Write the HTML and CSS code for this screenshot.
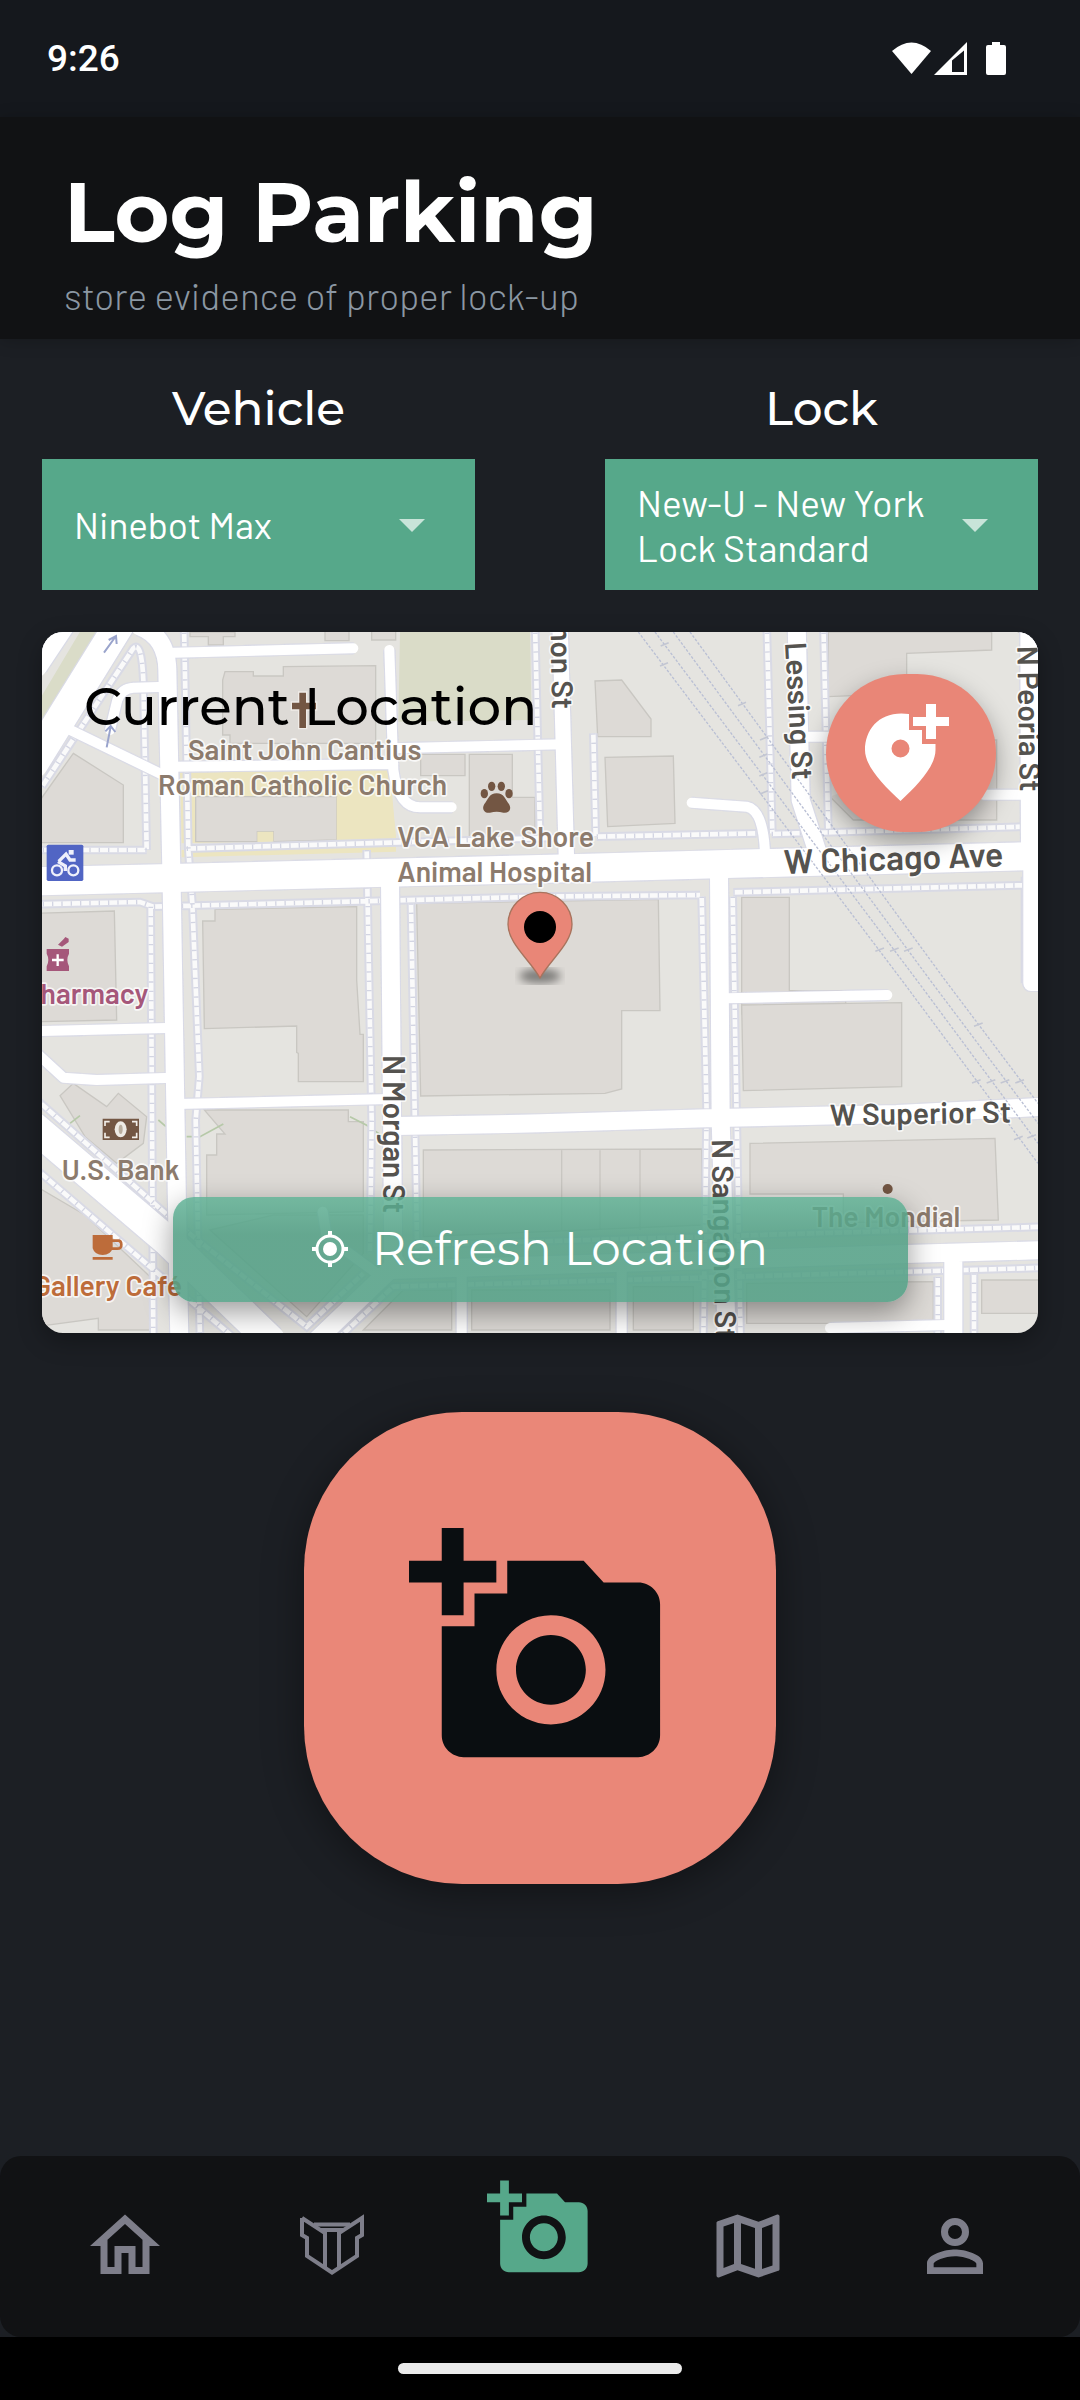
FILE: index.html
```html
<!DOCTYPE html>
<html lang="en">
<head>
<meta charset="utf-8">
<meta name="viewport" content="width=device-width, initial-scale=1">
<title>Log Parking</title>
<link rel="stylesheet" href="styles.css">
</head>
<body>
<div class="app">
  <div class="status">
    <time class="clock">9:26</time>
    <svg class="status-icons" viewBox="0 0 116 36" fill="#fff" aria-hidden="true">
      <path d="M0 10Q19.500 -7 39 10L19.500 33z"/>
      <path fill-rule="evenodd" d="M42 34L75 1V34zM60 19.500V31H72V9.500z"/>
      <path d="M100 1h8v3h4q2 0 2 2v26q0 2-2 2H96q-2 0-2-2V6q0-2 2-2h4z"/>
    </svg>
  </div>

  <header class="header">
    <h1 class="title">Log Parking</h1>
    <p class="subtitle">store evidence of proper lock-up</p>
  </header>

  <main class="main">
    <div class="fields">
      <div class="field">
        <label class="label" for="vehicle">Vehicle</label>
        <div class="picker">
          <select class="select" id="vehicle"><option>Ninebot Max</option></select>
          <svg class="caret" viewBox="0 0 26 13" aria-hidden="true"><path d="M0 0h26L13 13z"/></svg>
        </div>
      </div>
      <div class="field">
        <label class="label" for="lock">Lock</label>
        <div class="picker">
          <select class="select" id="lock"><option>New-U - New York Lock Standard</option></select>
          <svg class="caret" viewBox="0 0 26 13" aria-hidden="true"><path d="M0 0h26L13 13z"/></svg>
        </div>
      </div>
    </div>

    <section class="map-card">
      <svg class="map" viewBox="36 36 2988 2103" preserveAspectRatio="xMidYMid slice" role="img" aria-label="Map of the current location">
        <defs>
          <filter id="soft"><feGaussianBlur stdDeviation="12"/></filter>
          <g id="streets" fill="none" stroke-linejoin="round">
            <path class="w90" d="M10 130L90 10M270 10L10 430M10 1520L415 1865L720 2160"/>
            <path class="w84" d="M10 784L1530 747L3050 707"/>
            <path class="w56" d="M330 20Q410 50 412 150L425 800L440 1700L448 2160M1080 780L1090 1940M2067 760L2072 1500L2090 2160M2300 10L2312 540L2370 720M2998 10L3000 720M1100 1518L1530 1510L2030 1495L2600 1482L3050 1460M1080 1950L2600 1903L3050 1890M860 2160L1100 1930M2770 1900V2160"/>
            <path class="w48" d="M1590 10L1610 740M3003 720V1090H3050"/>
            <path class="w30" d="M430 98L970 85M1078 90L1090 450Q1105 562 1170 562H1265M1085 385L1600 373M430 440L1090 432M110 325L410 470M240 330L262 240Q275 205 310 203L410 200M1985 548L2150 560Q2200 570 2205 700M2330 350H2400M2860 524H3000M10 1234L410 1224M10 1290L100 1373L200 1380L430 1373M440 1452L1080 1437M2090 1135L2572 1125M1295 1950V2160M1775 1930V2160M2400 2124L2750 2115M878 1775L890 1850L1040 1960"/>
          </g>
          <g id="walks" fill="none">
            <path d="M462 10L475 690L487 850L508 1370L497 1500L510 2160M36 500L310 85Q335 60 340 180L350 690M362 860L370 2160M10 690H350M470 686L1590 653M10 853L330 846L370 860L1530 830L2010 825M1700 650L2180 640M2225 642L2980 620M2110 817L3050 794M1010 690L1025 1500L1020 1900M1143 850L1162 1920M1515 10L1530 640M1690 340L1697 650M2210 10L2227 640M2380 10L2395 630M2015 830L2030 1480L2020 2160M2108 830L2132 2160M10 1430L440 1810L830 2120L1000 1960M10 1640L360 1940L620 2160M920 2160L1090 2000L3050 1943M1150 1875L3050 1820M2723 1970V2160M2832 1960V2160M2985 770V1090"/>
          </g>
        </defs>
        <rect width="3100" height="2200" fill="#e5e4e0"/>
        <path fill="#dadcc8" d="M1110 36H1500L1505 300L1105 305zM165 10H230L10 360V270z"/>
        <path fill="#ece5c0" d="M450 458L1080 450L1098 655L455 670zM455 690L1098 680V695L455 712z"/>
        <g fill="#dddad6" stroke="#c9c7c2" stroke-width="4">
          <path d="M585 155H670V168H760V140L1037 137V370H600V345H578V180zM480 36H615V50H580V75H535V50H480zM885 30H957V62H885zM1025 30H1097V60H1025z"/>
          <path d="M130 400L280 495V668H20V555zM497 530H920V660L730 665V635H682V665H497zM1172 403H1305V467H1172zM1318 403H1447V532H1515V650H1318z"/>
          <path d="M20 880L253 873L260 1200L20 1205zM518 903H555V868L980 860V1080L990 1243H1000V1385H805V1300L800 1297V1218L523 1226zM1160 850L1885 838L1890 1172H1775V1407L1725 1420L1172 1428z"/>
          <path d="M1695 183L1775 180L1863 297V350H1703zM1725 412L1930 408L1935 610L1733 620zM2395 36H2885V90L2630 100V220L2395 230zM2400 530L2470 600H2900V360H2830M2135 832H2278V1112H2447V1182H2135z"/>
          <path d="M2135 1155L2615 1148V1400L2140 1412zM2160 1570L2895 1555L2905 1800L2440 1808V1722H2160zM1180 1590L2015 1587V1815L1180 1850zM1595 1590V1830M1710 1590V1830M1830 1590V1830"/>
          <path d="M523 1470H955V1505H1000V1775L530 1785V1605H560V1542H585zM90 1427L130 1390L230 1460L265 1420L350 1490L340 1570L260 1630L165 1550zM20 1700L165 1785L360 1970V2130H205V2095L20 2120z"/>
          <path d="M540 1830L730 1785H1000V1900L830 2090zM1000 2130L1120 2010H1265V2130zM1325 2010H1740V2130H1325zM1810 2000H1990V2130H1810zM2150 1990L2710 1985V2110H2150zM2855 1980H3050V2080H2855z"/>
        </g>
        <path fill="#ece5c0" d="M920 530H1085L1098 655L920 660zM682 635H730V665H682z"/>
        <path fill="none" stroke="#b6c9a8" stroke-width="5" d="M470 1550H510L580 1512M120 1510L150 1487M385 1500L408 1520M960 1490L1010 1516L1060 1550"/>
        <use href="#walks" stroke="#d9dae5" stroke-width="26"/>
        <use href="#walks" stroke="#fafafa" stroke-width="14"/>
        <use href="#walks" stroke="#d3d5e3" stroke-width="14" stroke-dasharray="4 24"/>
        <g class="casing"><use href="#streets" stroke="#d9dae6"/></g>
        <use href="#streets" stroke="#fff" stroke-linecap="round"/>
        <g fill="none" stroke="#b9bfd4" stroke-width="4" stroke-dasharray="8 5">
          <path d="M1825 36L2615 1080L3024 1630M1875 36L2660 1080L3024 1570M1930 36L2700 1080L3024 1510M1980 36L2745 1080L3024 1450"/>
        </g>
        <path fill="none" stroke="#c3c6d2" stroke-width="5" d="M1892 78l24-10M1890 138l24-10M2124 257l24-10M2190 360l24-10M2188 412l24-10M2188 468l24-10M2190 522l24-10M2536 994l26-10M2580 994l26-10M2622 994l26-10M2832 1219l26-10M2826 1389l26-10M2870 1389l26-10M2912 1389l26-10M2956 1389l26-10M2952 1559l26-10M2992 1554l26-10"/>
        <g fill="none" stroke="#9aa4cc" stroke-width="6"><path d="M222 98L258 48M236 60l22-12 2 24M230 382L242 320M226 334l16-16 14 18"/></g>

        <g class="lbl poi">
          <text x="474" y="420">Saint John Cantius</text>
          <text x="384" y="525">Roman Catholic Church</text>
          <text x="1102" y="682">VCA Lake Shore</text>
          <text x="1102" y="787">Animal Hospital</text>
          <text x="95" y="1679">U.S. Bank</text>
          <text x="2345" y="1822">The Mondial</text>
          <text class="pharmacy" x="355" y="1153" text-anchor="end">Pharmacy</text>
          <text class="cafe" x="456" y="2027" text-anchor="end">Gallery Café</text>
        </g>
        <g class="lbl road">
          <text class="big" transform="translate(2262 762) rotate(-2)">W Chicago Ave</text>
          <text transform="translate(2400 1517) rotate(-1)">W Superior St</text>
          <text transform="translate(1060 1305) rotate(90)">N Morgan St</text>
          <text transform="translate(2045 1558) rotate(89)">N Sangamon St</text>
          <text transform="translate(1566 268) rotate(89)" text-anchor="end">N Sangamon St</text>
          <text transform="translate(2265 68) rotate(87)">Lessing St</text>
          <text transform="translate(2962 78) rotate(89)">N Peoria St</text>
        </g>

        <path fill="#735643" stroke="#f0ece8" stroke-width="4" d="M806 216h24v30h30v24h-30v56h-24v-56h-22v-24h22z"/>
        <g fill="#735643">
          <ellipse cx="1363" cy="521" rx="11" ry="14"/><ellipse cx="1385" cy="499" rx="11" ry="14"/><ellipse cx="1414" cy="499" rx="11" ry="14"/><ellipse cx="1437" cy="521" rx="11" ry="14"/>
          <path d="M1400 520c22 0 26 18 34 28 14 16 4 34-14 30-14-4-26-4-40 0-18 4-28-14-14-30 8-10 12-28 34-28z"/>
          <circle cx="2573" cy="1707" r="15"/>
          <path d="M218 1496h109v64H218z"/>
        </g>
        <g fill="none" stroke="#f3efea" stroke-width="5"><path d="M225 1518v-13h14M306 1505h14v13M225 1538v14h14M306 1552h14v-14"/></g>
        <ellipse cx="272" cy="1528" rx="18" ry="24" fill="#eeeae4"/><ellipse cx="272" cy="1528" rx="6" ry="14" fill="#b9ae9f"/>
        <rect x="50" y="674" width="110" height="109" rx="5" fill="#5165c4"/>
        <g fill="none" stroke="#eef0fb" stroke-width="7"><circle cx="81" cy="751" r="15"/><circle cx="130" cy="751" r="15"/><path d="M84 725L106 738V753M86 724L108 702L120 720H137" stroke-width="10"/></g>
        <rect x="116" y="690" width="15" height="14" fill="#eef0fb"/>
        <path fill="#a5577a" d="M50 987h67v14q-10 18 0 38v14H50v-14q10-20 0-38zM84 974L102 956 106 951 116 956V966L96 980z"/>
        <path stroke="#fff" stroke-width="7" d="M66 1020h35M83 1003v35"/>
        <path fill="#bd6c3a" d="M188 1845h60v40q-6 20-30 20t-30-20zM188 1911h60v8h-60z"/>
        <path fill="none" stroke="#bd6c3a" stroke-width="8" d="M246 1862h18q10 0 10 12t-12 12h-18"/>

        <ellipse cx="1530" cy="1068" rx="62" ry="22" fill="#7d7b79" filter="url(#soft)"/>
        <path fill="#e98677" stroke="#a8735d" stroke-width="4" d="M1530 1074C1500 1020 1434 970 1434 913A96 96 0 0 1 1626 913C1626 970 1560 1020 1530 1074z"/>
        <circle cx="1530" cy="921" r="48"/>
      </svg>
      <div class="map-top">
        <h2 class="map-title">Current Location</h2>
        <button class="pin-button" type="button" aria-label="Add location">
          <svg class="pin-icon" viewBox="0 0 84 98" aria-hidden="true">
            <path fill="#fff" fill-rule="evenodd" d="M44 10V26H57V40H70.500V46C70.500 62 53 81 35.500 97C18 81 0 62 0 46C0 24 16 6 44 10zM35.500 35.500a9 9 0 1 0 0 18a9 9 0 1 0 0-18zM61 0h10v13h13v9H71v13H61V22H48v-9h13z"/>
          </svg>
        </button>
      </div>
      <button class="refresh" type="button">
        <svg class="refresh-icon" viewBox="0 0 36 36" fill="none" stroke="#fff" aria-hidden="true">
          <circle cx="18" cy="18" r="13" stroke-width="3"/><circle cx="18" cy="18" r="7" fill="#fff" stroke="none"/><path stroke-width="4" d="M18 0v5M18 31v5M0 18h5M31 18h5"/>
        </svg>
        Refresh Location
      </button>
    </section>

    <button class="camera" type="button" aria-label="Take photo">
      <svg class="camera-icon" viewBox="0 0 24 24" aria-hidden="true"><path id="add-photo" d="M3 4V1h2v3h3v2H5v3H3V6H0V4h3zm3 6V7h3V4h7l1.830 2H21c1.100 0 2 .9 2 2v12c0 1.100-.9 2-2 2H5c-1.100 0-2-.9-2-2V10h3zm7 9c2.760 0 5-2.240 5-5s-2.240-5-5-5-5 2.240-5 5 2.240 5 5 5zm-3.200-5c0 1.770 1.430 3.200 3.200 3.200s3.200-1.430 3.200-3.200-1.430-3.200-3.200-3.200-3.200 1.430-3.200 3.200z"/></svg>
    </button>
  </main>

  <nav class="nav">
    <a class="tab" href="#home" aria-label="Home"><svg class="tab-icon" viewBox="0 0 24 24"><path d="M12 5.690l5 4.500V18h-2v-6H9v6H7v-7.810l5-4.500M12 3L2 12h3v8h6v-6h2v6h6v-8h3L12 3z"/></svg></a>
    <a class="tab" href="#guard" aria-label="Guard"><svg class="tab-icon" viewBox="0 0 84 84"><g fill="none" stroke="currentColor" stroke-width="4"><path d="M12 14V31L17 34V52L42 68.500L67 52V34L72 31V14L49 29V63M12 14L35 29V63"/><path d="M24 20.500H60M31 26H53"/></g></svg></a>
    <a class="tab tab-active" href="#log" aria-label="Log parking" aria-current="page"><svg class="tab-icon-large" viewBox="0 0 24 24"><use href="#add-photo"/></svg></a>
    <a class="tab" href="#map" aria-label="Map"><svg class="tab-icon" viewBox="0 0 24 24"><path d="M20.500 3L20.340 3.030L15 5.100L9 3L3.360 4.900C3.150 4.970 3 5.150 3 5.380V20.500A.5.5 0 0 0 3.500 21L3.660 20.970L9 18.900L15 21L20.640 19.100C20.850 19.030 21 18.850 21 18.620V3.500A.5.5 0 0 0 20.500 3M10 5.470L14 6.870V18.530L10 17.130V5.470M5 6.460L8 5.450V17.150L5 18.310V6.460M19 17.540L16 18.550V6.860L19 5.700V17.540Z"/></svg></a>
    <a class="tab" href="#profile" aria-label="Profile"><svg class="tab-icon" viewBox="0 0 24 24"><path d="M12 4A4 4 0 0 1 16 8A4 4 0 0 1 12 12A4 4 0 0 1 8 8A4 4 0 0 1 12 4M12 6A2 2 0 0 0 10 8A2 2 0 0 0 12 10A2 2 0 0 0 14 8A2 2 0 0 0 12 6M12 13C14.670 13 20 14.330 20 17V20H4V17C4 14.330 9.330 13 12 13M12 14.900C9.030 14.900 5.900 16.360 5.900 17V18.100H18.100V17C18.100 16.360 14.970 14.900 12 14.900Z"/></svg></a>
  </nav>
  <div class="gesture"><div class="gesture-bar"></div></div>
</div>
</body>
</html>
```
FILE: styles.css
```css
* { box-sizing: border-box; margin: 0; }
body { background: #1c1f24; color: #fff; font-family: Montserrat, Inter, sans-serif; }
button, select { border: 0; font: inherit; color: inherit; cursor: pointer; }
svg { display: block; }

.app { display: flex; flex-direction: column; min-height: 100vh; }

.status { display: flex; justify-content: space-between; align-items: center; height: 117px; padding: 0 72px 0 47px; background: #15181d; }
.clock { font-family: Roboto, sans-serif; font-size: 37px; font-weight: 500; line-height: 48px; }
.status-icons { width: 116px; height: 36px; }

.header { padding: 44px 64px 20px; background: #111214; box-shadow: 0 2px 16px rgba(0, 0, 0, .2); }
.title { font-size: 84px; font-weight: 700; line-height: 102px; }
.subtitle { margin-top: 8px; color: #8b97a3; font-family: Barlow, Roboto, sans-serif; font-size: 37px; font-weight: 300; line-height: 48px; }

.main { display: flex; flex-direction: column; flex: 1; padding: 41px 42px 0; }
.fields { display: grid; grid-template-columns: 1fr 1fr; gap: 130px; }
.field { display: flex; flex-direction: column; gap: 21px; }
.label { font-size: 47px; font-weight: 500; line-height: 58px; text-align: center; }
.picker { position: relative; display: flex; }
.select { width: 100%; height: 131px; padding: 0 100px 0 32px; appearance: none; background: #56a88a; border-radius: 0; font-family: Barlow, Roboto, sans-serif; font-size: 37px; line-height: 45px; white-space: pre-wrap; }
.caret { position: absolute; right: 50px; top: 60px; width: 26px; height: 13px; fill: #c8e4d9; pointer-events: none; }

.map-card { position: relative; display: flex; flex-direction: column; justify-content: space-between; margin-top: 42px; padding: 42px 42px 31px; aspect-ratio: 996 / 701; border-radius: 21px; overflow: hidden; box-shadow: 0 8px 24px rgba(0, 0, 0, .3); }
.map { position: absolute; inset: 0; width: 100%; height: 100%; }
.map-top, .refresh { position: relative; }
.map-top { display: flex; justify-content: space-between; align-items: flex-start; }
.map-title { color: #000; font-size: 53px; font-weight: 500; line-height: 64px; }
.pin-button { display: grid; place-items: center; width: 170px; height: 158px; padding: 0 8px 0 0; border-radius: 79px; background: #e98677; box-shadow: 0 10px 24px rgba(0, 0, 0, .35); }
.pin-icon { width: 84px; height: 98px; }
.refresh { display: flex; align-items: center; justify-content: center; gap: 24px; align-self: center; width: 735px; height: 105px; padding: 0 0 2px; border-radius: 21px; background: linear-gradient(rgba(92, 176, 147, .82), rgba(84, 160, 134, .88) 36%); box-shadow: 0 10px 30px rgba(0, 0, 0, .4); font-size: 47px; font-weight: 400; }
.refresh-icon { width: 36px; height: 36px; }

.map .w90 { stroke-width: 90px; }
.map .w84 { stroke-width: 84px; }
.map .w56 { stroke-width: 54px; }
.map .w48 { stroke-width: 46px; }
.map .w30 { stroke-width: 30px; }
.casing { filter: drop-shadow(2px 0 0 #d9dae6) drop-shadow(-2px 0 0 #d9dae6) drop-shadow(0 2px 0 #d9dae6) drop-shadow(0 -2px 0 #d9dae6); }
.lbl { font-family: Barlow, Roboto, sans-serif; font-weight: 600; paint-order: stroke; stroke: rgba(255, 255, 255, .75); stroke-width: 10px; stroke-linejoin: round; }
.poi { fill: #8c7b6d; font-size: 85px; }
.road { fill: #55534f; font-size: 90px; }
.road .big { font-size: 102px; }
.pharmacy { fill: #a5577a; }
.cafe { fill: #bd6c3a; }

.camera { display: grid; place-items: center; align-self: center; width: 472px; height: 472px; margin-top: 79px; padding: 0; border-radius: 158px; background: #ea8778; box-shadow: 0 8px 40px rgba(0, 0, 0, .4); }
.camera-icon { width: 262px; height: 262px; fill: #0a0e11; }

.nav { display: grid; grid-template-columns: repeat(5, 1fr); height: 181px; padding: 0 21px 2px; border-radius: 21px; background: #111214; }
.tab { display: grid; place-items: center; color: #7e7e8a; fill: currentColor; }
.tab-active { padding-bottom: 34px; color: #56a88a; }
.tab-icon { width: 84px; height: 84px; }
.tab-icon-large { width: 105px; height: 105px; }

.gesture { display: flex; justify-content: center; height: 63px; padding-top: 26px; background: #000; }
.gesture-bar { width: 284px; height: 11px; border-radius: 6px; background: #ebebeb; }
```
